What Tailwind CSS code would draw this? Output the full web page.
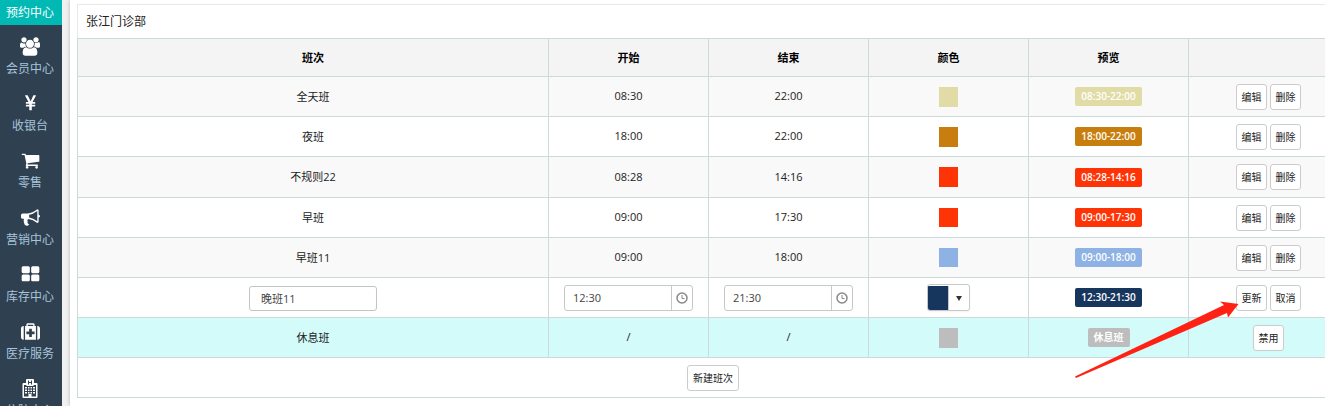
<!DOCTYPE html>
<html lang="zh-CN">
<head>
    <meta charset="UTF-8">
    <meta name="viewport" content="width=device-width, initial-scale=1.0">
    <title>班次设置</title>
    <script src="https://cdn.jsdelivr.net/npm/@tailwindcss/browser@4"></script>
</head>
<body class="flex h-screen overflow-hidden bg-[#f1f1f1] font-['Open_Sans','Noto_Sans_CJK_SC',sans-serif] text-[11px] text-[#222]">
    <!-- Sidebar -->
    <nav class="w-[62px] shrink-0 bg-[#2f4050] text-xs leading-4 text-[#a7c4dc]">
        <a href="#" class="flex h-[25px] items-center justify-center bg-[#00b9b4] pt-px pr-0.5 text-white">预约中心</a>
        <a href="#" class="flex h-[57px] flex-col items-center gap-[5px] pt-3 pr-0.5">
            <svg class="h-[19px] w-5 shrink-0 fill-white" viewBox="0 0 1920 1792"><path d="M593 896q-162 5-265 128h-134q-82 0-138-40.5t-56-118.5q0-353 124-353 6 0 43.5 21t97.5 42.5 119 21.5q67 0 133-23-5 37-5 66 0 159 93 293zm1071 637q0 120-73 189.5t-194 69.5h-874q-121 0-194-69.5t-73-189.5q0-53 3.5-103.5t14-109 26.5-108.5 43-97.5 62-81 85.5-53.5 111.5-20q10 0 43 21.5t73 48 107 48 135 21.5 135-21.5 107-48 73-48 43-21.5q61 0 111.5 20t85.5 53.5 62 81 43 97.5 26.5 108.5 14 109 3.5 103.5zm-1024-1277q0 106-75 181t-181 75-181-75-75-181 75-181 181-75 181 75 75 181zm704 384q0 159-112.5 271.5t-271.5 112.5-271.5-112.5-112.5-271.5 112.5-271.5 271.5-112.5 271.5 112.5 112.5 271.5zm576 225q0 78-56 118.5t-138 40.5h-134q-103-123-265-128 93-134 93-293 0-29-5-66 66 23 133 23 59 0 119-21.5t97.5-42.5 43.5-21q124 0 124 353zm-128-609q0 106-75 181t-181 75-181-75-75-181 75-181 181-75 181 75 75 181z"/></svg>
            <span>会员中心</span>
        </a>
        <a href="#" class="flex h-[57px] flex-col items-center gap-[5px] pt-3 pr-0.5">
            <svg class="size-[19px] shrink-0 fill-white" viewBox="0 0 1792 1792"><path d="M985.500 1536h-172q-13 0-22.500-9t-9.500-23v-330h-288q-13 0-22.500-9t-9.500-23v-103q0-13 9.500-22.500t22.500-9.500h288v-85h-288q-13 0-22.500-9t-9.500-23v-104q0-13 9.500-22.500t22.500-9.500h214l-321-578q-8-16 0-32 10-16 28-16h194q19 0 29 18l215 425q19 38 56 125 10-24 30.500-68t27.500-61l191-420q8-19 29-19h191q17 0 27 16 9 14 1 31l-313 579h215q13 0 22.500 9.500t9.500 22.500v104q0 14-9.500 23t-22.500 9h-290v85h290q13 0 22.500 9.500t9.500 22.500v103q0 14-9.500 23t-22.500 9h-290v330q0 13-9.500 22.500t-22.500 9.500z"/></svg>
            <span>收银台</span>
        </a>
        <a href="#" class="flex h-[57px] flex-col items-center gap-[5px] pt-3 pr-0.5">
            <svg class="size-[19px] shrink-0 fill-white" viewBox="0 0 1792 1792"><path d="M704 1536q0 52-38 90t-90 38-90-38-38-90 38-90 90-38 90 38 38 90zm896 0q0 52-38 90t-90 38-90-38-38-90 38-90 90-38 90 38 38 90zm128-1088v512q0 24-16.500 42.500t-40.500 21.500l-1044 122q13 60 13 70 0 16-24 64h920q26 0 45 19t19 45-19 45-45 19h-1024q-26 0-45-19t-19-45q0-11 8-31.500t16-36 21.500-40 15.500-29.500l-177-823h-204q-26 0-45-19t-19-45 19-45 45-19h256q16 0 28.500 6.500t19.500 15.500 13 24.500 8 26 5.500 29.500 4.500 26h1201q26 0 45 19t19 45z"/></svg>
            <span>零售</span>
        </a>
        <a href="#" class="flex h-[57px] flex-col items-center gap-[5px] pt-3 pr-0.5">
            <svg class="size-[19px] shrink-0 fill-white" viewBox="0 0 1792 1792"><path d="M1664 640q53 0 90.500 37.500t37.500 90.500-37.500 90.500-90.500 37.500v384q0 52-38 90t-90 38q-417-347-812-380-58 19-91 66t-31 100.500 40 92.500q-20 33-23 65.500t6 58 33.500 55 48 50 61.500 50.500q-29 58-111.500 83t-168.500 11.500-132-55.500q-7-23-29.500-87.500t-32-94.500-23-89-15-101 3.500-98.500 22-110.500h-122q-66 0-113-47t-47-113v-192q0-66 47-113t113-47h480q435 0 896-384 52 0 90 38t38 90v384zm-128 604v-954q-394 302-768 343v270q377 42 768 341z"/></svg>
            <span>营销中心</span>
        </a>
        <a href="#" class="flex h-[57px] flex-col items-center gap-[5px] pt-3 pr-0.5">
            <svg class="size-[19px] shrink-0 fill-white" viewBox="0 0 1792 1792"><path d="M832 1024v384q0 52-38 90t-90 38h-512q-52 0-90-38t-38-90v-384q0-52 38-90t90-38h512q52 0 90 38t38 90zm0-768v384q0 52-38 90t-90 38h-512q-52 0-90-38t-38-90v-384q0-52 38-90t90-38h512q52 0 90 38t38 90zm896 768v384q0 52-38 90t-90 38h-512q-52 0-90-38t-38-90v-384q0-52 38-90t90-38h512q52 0 90 38t38 90zm0-768v384q0 52-38 90t-90 38h-512q-52 0-90-38t-38-90v-384q0-52 38-90t90-38h512q52 0 90 38t38 90z"/></svg>
            <span>库存中心</span>
        </a>
        <a href="#" class="flex h-[57px] flex-col items-center gap-[5px] pt-3 pr-0.5">
            <svg class="size-[19px] shrink-0 fill-white" viewBox="0 0 1792 1792"><path d="M1280 1120v-192q0-14-9-23t-23-9h-224v-224q0-14-9-23t-23-9h-192q-14 0-23 9t-9 23v224h-224q-14 0-23 9t-9 23v192q0 14 9 23t23 9h224v224q0 14 9 23t23 9h192q14 0 23-9t9-23v-224h224q14 0 23-9t9-23zm-640-736h512v-128h-512v128zm-384 0v1280h-32q-92 0-158-66t-66-158v-832q0-92 66-158t158-66h32zm1152 0v1280h-1024v-1280h128v-160q0-40 28-68t68-28h576q40 0 68 28t28 68v160h128zm384 224v832q0 92-66 158t-158 66h-32v-1280h32q92 0 158 66t66 158z"/></svg>
            <span>医疗服务</span>
        </a>
        <a href="#" class="flex h-[57px] flex-col items-center gap-[5px] pt-3 pr-0.5">
            <svg class="h-[19px] w-4 shrink-0" viewBox="0 0 16 19">
                <path class="fill-white" fill-rule="evenodd" d="M5 0h6q1 0 1 1v3h2.500q1 0 1 1v13q0 1-1 1h-13q-1 0-1-1V5q0-1 1-1H4V1q0-1 1-1zM2 6v11.500h4.500V15h3v2.500H14V6h-2q-.5 1-1 1H5q-.5 0-1-1z"/>
                <path class="fill-[#2f4050]" d="M6 1.500h1V3h2V1.500h1v4H9V4H7v1.500H6z"/>
                <path class="fill-white" d="M3 8h2v1.500H3zm3 0h1.500v1.500H6zm2.500 0H10v1.500H8.500zm2.500 0h2v1.500h-2zM3 10.500h2V12H3zm3 0h1.500V12H6zm2.500 0H10V12H8.500zm2.500 0h2V12h-2zM3 13h2v1.500H3zm3 0h1.500v1.500H6zm2.500 0H10v1.500H8.500zm2.500 0h2v1.500h-2z"/>
            </svg>
            <span>住院中心</span>
        </a>
    </nav>

    <!-- Shift settings -->
    <main class="ml-2 min-w-0 flex-1 bg-white pt-1 pl-[7px] shadow-[0_0_4px_rgba(0,0,0,0.25)]">
        <div class="min-w-[1272px]">
            <h1 class="flex h-[34px] items-center border border-b-0 border-[#e4e9ea] px-2 pt-px text-xs">张江门诊部</h1>
            <table class="w-full table-fixed border-collapse text-center [&_button]:pt-px [&_td]:border [&_td]:border-[#cddadc] [&_td]:p-0 [&_td:first-child]:pt-px [&_th]:border [&_th]:border-[#cddadc] [&_th]:pt-0.5">
                <colgroup>
                    <col>
                    <col class="w-40">
                    <col class="w-40">
                    <col class="w-40">
                    <col class="w-40">
                    <col class="w-40">
                </colgroup>
                <thead>
                    <tr class="h-[38px] bg-[#f4f4f4] text-black">
                        <th>班次</th>
                        <th>开始</th>
                        <th>结束</th>
                        <th>颜色</th>
                        <th>预览</th>
                        <th></th>
                    </tr>
                </thead>
                <tbody>
                    <tr class="h-10 bg-[#f9f9f9]">
                        <td>全天班</td>
                        <td>08:30</td>
                        <td>22:00</td>
                        <td><div class="mx-auto h-5 w-[19px] bg-[#e1dca5]"></div></td>
                        <td><div class="mx-auto h-[19px] w-fit rounded-xs bg-[#e1dca5] px-[6px] text-[10px] leading-[19px] font-semibold text-white">08:30-22:00</div></td>
                        <td>
                            <div class="flex justify-center gap-[3px]">
                                <button class="h-[26px] w-[31px] rounded-[3px] border border-[#ccc] bg-white text-[10px]">编辑</button>
                                <button class="h-[26px] w-[31px] rounded-[3px] border border-[#ccc] bg-white text-[10px]">删除</button>
                            </div>
                        </td>
                    </tr>
                    <tr class="h-10">
                        <td>夜班</td>
                        <td>18:00</td>
                        <td>22:00</td>
                        <td><div class="mx-auto h-5 w-[19px] bg-[#c87e0e]"></div></td>
                        <td><div class="mx-auto h-[19px] w-fit rounded-xs bg-[#c87e0e] px-[6px] text-[10px] leading-[19px] font-semibold text-white">18:00-22:00</div></td>
                        <td>
                            <div class="flex justify-center gap-[3px]">
                                <button class="h-[26px] w-[31px] rounded-[3px] border border-[#ccc] bg-white text-[10px]">编辑</button>
                                <button class="h-[26px] w-[31px] rounded-[3px] border border-[#ccc] bg-white text-[10px]">删除</button>
                            </div>
                        </td>
                    </tr>
                    <tr class="h-[41px] bg-[#f9f9f9]">
                        <td>不规则22</td>
                        <td>08:28</td>
                        <td>14:16</td>
                        <td><div class="mx-auto h-5 w-[19px] bg-[#ff3406]"></div></td>
                        <td><div class="mx-auto h-[19px] w-fit rounded-xs bg-[#ff3406] px-[6px] text-[10px] leading-[19px] font-semibold text-white">08:28-14:16</div></td>
                        <td>
                            <div class="flex justify-center gap-[3px]">
                                <button class="h-[26px] w-[31px] rounded-[3px] border border-[#ccc] bg-white text-[10px]">编辑</button>
                                <button class="h-[26px] w-[31px] rounded-[3px] border border-[#ccc] bg-white text-[10px]">删除</button>
                            </div>
                        </td>
                    </tr>
                    <tr class="h-10">
                        <td>早班</td>
                        <td>09:00</td>
                        <td>17:30</td>
                        <td><div class="mx-auto size-[19px] bg-[#ff3406]"></div></td>
                        <td><div class="mx-auto h-[19px] w-fit rounded-xs bg-[#ff3406] px-[6px] text-[10px] leading-[19px] font-semibold text-white">09:00-17:30</div></td>
                        <td>
                            <div class="flex justify-center gap-[3px]">
                                <button class="h-[26px] w-[31px] rounded-[3px] border border-[#ccc] bg-white text-[10px]">编辑</button>
                                <button class="h-[26px] w-[31px] rounded-[3px] border border-[#ccc] bg-white text-[10px]">删除</button>
                            </div>
                        </td>
                    </tr>
                    <tr class="h-10 bg-[#f9f9f9]">
                        <td>早班11</td>
                        <td>09:00</td>
                        <td>18:00</td>
                        <td><div class="mx-auto size-[19px] bg-[#8db2e3]"></div></td>
                        <td><div class="mx-auto h-[19px] w-fit rounded-xs bg-[#8db2e3] px-[6px] text-[10px] leading-[19px] font-semibold text-white">09:00-18:00</div></td>
                        <td>
                            <div class="flex justify-center gap-[3px]">
                                <button class="h-[26px] w-[31px] rounded-[3px] border border-[#ccc] bg-white text-[10px]">编辑</button>
                                <button class="h-[26px] w-[31px] rounded-[3px] border border-[#ccc] bg-white text-[10px]">删除</button>
                            </div>
                        </td>
                    </tr>
                    <!-- Row being edited -->
                    <tr class="h-10">
                        <td><input type="text" aria-label="班次" value="晚班11" class="mx-auto block h-[25px] w-32 rounded-[3px] border border-[#c4c4c4] bg-white px-[11px] text-[#444]"></td>
                        <td>
                            <div class="mx-auto flex h-[26px] w-[129px] rounded-[3px] border border-[#c8c8c8] bg-white">
                                <input type="text" aria-label="开始" value="12:30" class="min-w-0 flex-1 px-2 pt-0.5 text-[#444]">
                                <button aria-label="选择开始时间" class="flex w-[21px] items-center justify-center border-l border-[#c8c8c8]">
                                    <svg class="size-3 fill-none stroke-[#888]" viewBox="0 0 12 12"><circle cx="6" cy="6" r="5" stroke-width="1.500"/><path d="M6 3v3.500h2.500"/></svg>
                                </button>
                            </div>
                        </td>
                        <td>
                            <div class="mx-auto flex h-[26px] w-[129px] rounded-[3px] border border-[#c8c8c8] bg-white">
                                <input type="text" aria-label="结束" value="21:30" class="min-w-0 flex-1 px-2 pt-0.5 text-[#444]">
                                <button aria-label="选择结束时间" class="flex w-[21px] items-center justify-center border-l border-[#c8c8c8]">
                                    <svg class="size-3 fill-none stroke-[#888]" viewBox="0 0 12 12"><circle cx="6" cy="6" r="5" stroke-width="1.500"/><path d="M6 3v3.500h2.500"/></svg>
                                </button>
                            </div>
                        </td>
                        <td>
                            <button aria-label="选择颜色" aria-haspopup="true" class="mx-auto flex h-[27px] w-[43px] overflow-hidden rounded-[3px] border border-[#c8c8c8] bg-white shadow-xs">
                                <span class="h-6 w-[21px] border-r border-[#c8c8c8] bg-[#17365d]"></span>
                                <span class="flex h-full flex-1 items-center justify-center">
                                    <svg class="h-[5px] w-[6px] fill-[#333]" viewBox="0 0 6 5"><path d="M0 0h6L3 5z"/></svg>
                                </span>
                            </button>
                        </td>
                        <td><div class="mx-auto h-[19px] w-fit rounded-xs bg-[#17365d] px-[6px] text-[10px] leading-[19px] font-semibold text-white">12:30-21:30</div></td>
                        <td>
                            <div class="relative flex justify-center gap-[3px]">
                                <button class="h-[26px] w-[31px] rounded-[3px] border border-[#ccc] bg-white text-[10px]">更新</button>
                                <button class="h-[26px] w-[31px] rounded-[3px] border border-[#ccc] bg-white text-[10px]">取消</button>
                                <!-- Pointer to the update button -->
                                <svg class="pointer-events-none absolute top-4 right-[109px] h-[77px] w-[164px] fill-[#ff2214]" viewBox="0 0 164 77"><path d="M0 75.500L149 4 145 .5 163.500 3 153 16.500 152 12 1 77z"/></svg>
                            </div>
                        </td>
                    </tr>
                    <tr class="h-10 bg-[#d2fbfa]">
                        <td>休息班</td>
                        <td>/</td>
                        <td>/</td>
                        <td><div class="mx-auto h-5 w-[19px] bg-[#bdbdbd]"></div></td>
                        <td><div class="mx-auto h-[19px] w-fit rounded-xs bg-[#bdbdbd] px-[6px] text-[10px] leading-[19px] font-semibold text-white">休息班</div></td>
                        <td><button class="h-[26px] w-[31px] rounded-[3px] border border-[#ccc] bg-white text-[10px]">禁用</button></td>
                    </tr>
                    <tr class="h-10">
                        <td colspan="6"><button class="h-[26px] w-[52px] rounded-[3px] border border-[#ccc] bg-white text-[10px]">新建班次</button></td>
                    </tr>
                </tbody>
            </table>
        </div>
    </main>
</body>
</html>
